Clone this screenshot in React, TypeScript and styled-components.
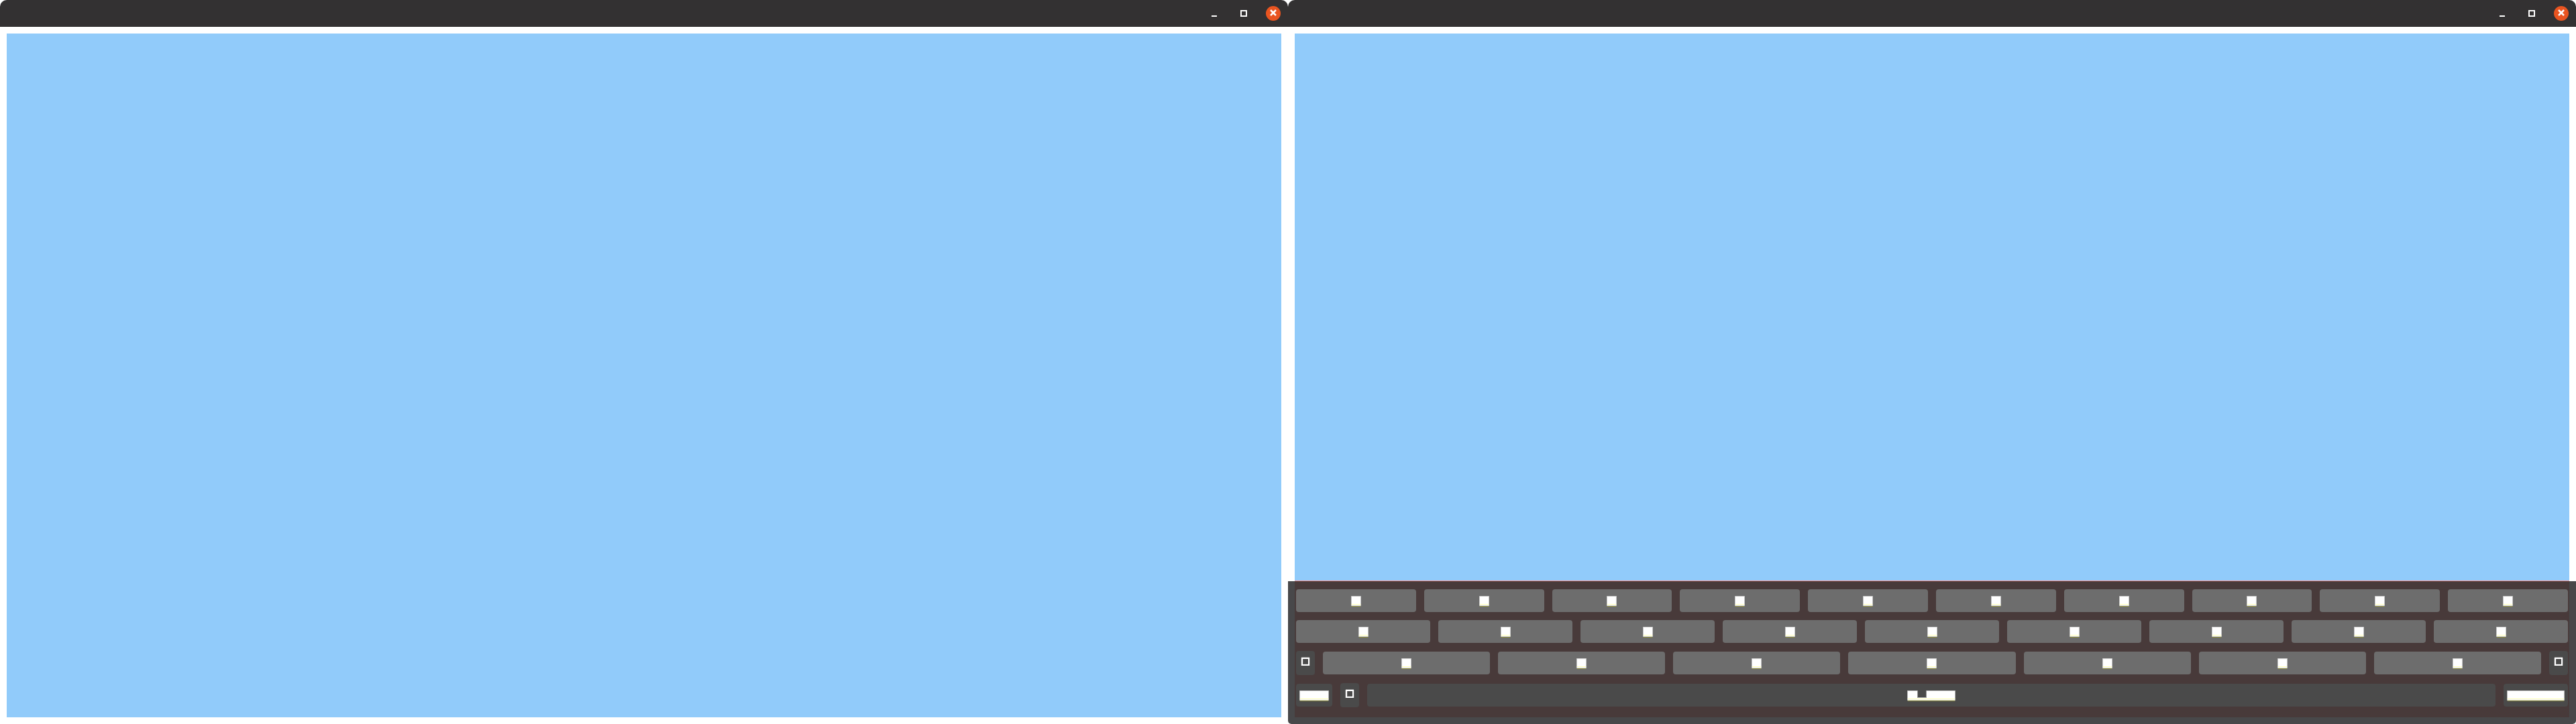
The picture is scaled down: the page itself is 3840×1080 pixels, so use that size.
import React from "react";
import styled, { createGlobalStyle } from "styled-components";

const Global = createGlobalStyle`
  *{box-sizing:border-box}
  body{margin:0;background:#fff;font-family:"Liberation Sans",Arial,sans-serif}
`;
const Screen = styled.main`display:grid;grid-template-columns:1fr 1fr;width:3840px;height:1080px;overflow:hidden;background:#fff;`;
const Window = styled.section`display:flex;flex-direction:column;min-width:0;height:1080px;`;
const TitleBar = styled.header`
  display:flex;align-items:flex-start;justify-content:flex-end;flex:none;height:40px;
  padding-right:11px;background:#333132;border-radius:10px 10px 0 0;border-bottom:1px solid #2a2829;
`;
const Controls = styled.svg`display:block;flex:none;width:105px;height:40px;`;
const Canvas = styled.div`flex:1;margin:10px 10px 0;background:#91cbfa;`;
const Footer = styled.div`flex:none;height:10px;`;
const Keyboard = styled.div`
  flex:none;height:213px;padding:0 10px 10px;background:#48484a;border-radius:0 0 5px 5px;
`;
const KeyboardEdge = styled.div`flex:none;height:1px;margin:0 10px;background:#f7928f;`;
const Rows = styled.div`
  display:flex;flex-direction:column;gap:12px;height:203px;padding:12px 2px 0;background:#483a3a;
`;
const Row = styled.div`display:flex;align-items:center;gap:12px;`;
const Key = styled.div<{ $w?: number; $dark?: boolean; $tall?: boolean }>`
  display:flex;justify-content:center;align-items:flex-start;
  flex:${p => (p.$w ? `0 0 ${p.$w}px` : "1 1 0")};
  height:${p => (p.$tall ? 36 : 34)}px;
  padding-top:10px;
  border-radius:4px;background:${p => (p.$dark ? "#4a4a4a" : "#6d6d6d")};
`;
const Label = styled.svg`display:block;flex:none;`;
const Box = styled.div`
  width:12px;height:12px;border:2px solid #fff;
  box-shadow:0 -1px 0 #8a8a8a,-1px 0 0 #6c6c6c,1px 0 0 #6c6c6c,inset 1px 0 0 #666,inset 0 -1px 0 #666;
`;

const Block = ({ w, notch }: { w: number; notch?: boolean }) => (
  <Label width={w} height={16} viewBox={`0 0 ${w} 16`}>
    <rect width={w} height={15} fill="#fff" opacity=".45" />
    <rect x={0.5} width={w - 1} height={1} fill="#cfcfcf" />
    <rect x={0.7} y={1} width={w - 1.4} height={13} fill="#fff" />
    <rect x={0.7} y={12} width={w - 1.4} height={1} fill="#ffffb5" />
    <rect x={0.7} y={14} width={w - 1.4} height={1} fill="#cfcfcf" />
    <rect x={0.7} y={15} width={w - 1.4} height={1} fill="#8f8f3e" />
    {notch && <rect x={15} width={14} height={11} fill="#999" />}
    {notch && <rect x={16} width={12} height={10} fill="#4a4a4a" />}
  </Label>
);

const Bar = () => (
  <TitleBar>
    <Controls viewBox="0 0 105 40">
      <rect x="2" y="23" width="8" height="2" fill="#fff" />
      <rect x="46" y="16" width="8" height="8" fill="none" stroke="#fff" strokeWidth="2" />
      <circle cx="94" cy="20" r="11" fill="#e95420" />
      <path d="M90 15l8 8M98 15l-8 8" stroke="#fff" strokeWidth="2.5" />
    </Controls>
  </TitleBar>
);

const keys = (n: number) => Array.from({ length: n }, (_, i) => <Key key={i}><Block w={15} /></Key>);

export default function App() {
  return (
    <>
      <Global />
      <Screen>
        <Window><Bar /><Canvas /><Footer /></Window>
        <Window>
          <Bar />
          <Canvas />
          <KeyboardEdge />
          <Keyboard>
            <Rows>
              <Row>{keys(10)}</Row>
              <Row>{keys(9)}</Row>
              <Row>
                <Key $w={28} $dark $tall><Box /></Key>
                {keys(7)}
                <Key $w={28} $dark $tall><Box /></Key>
              </Row>
              <Row>
                <Key $w={54} $dark><Block w={44} /></Key>
                <Key $w={28} $dark $tall><Box /></Key>
                <Key $dark><Block w={72} notch /></Key>
                <Key $w={96} $dark><Block w={86} /></Key>
              </Row>
            </Rows>
          </Keyboard>
        </Window>
      </Screen>
    </>
  );
}
